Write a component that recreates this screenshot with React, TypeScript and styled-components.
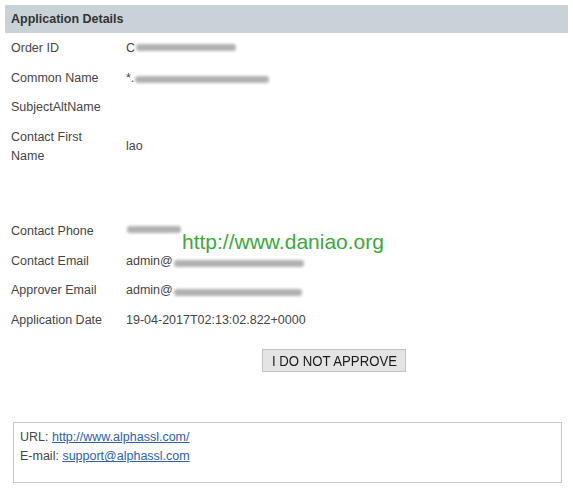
import React from "react";
import styled, { createGlobalStyle } from "styled-components";

const Global = createGlobalStyle`
  html, body { margin: 0; padding: 0; background: #ffffff; }
  body { font-family: "Liberation Sans", Arial, sans-serif; color: #444; }
`;

const Page = styled.div`
  position: relative;
  width: 573px;
  height: 489px;
  box-sizing: border-box;
  padding: 5px 5px 0 5px;
  overflow: hidden;
`;

const Header = styled.div`
  height: 28px;
  background: #c8d2d7;
  display: flex;
  align-items: center;
  padding-left: 6px;
  font-size: 12.5px;
  font-weight: bold;
  color: #333;
`;

const Table = styled.div`
  display: grid;
  grid-template-columns: 115px 1fr;
  padding: 1px 0 0 6px;
`;

const Label = styled.div<{ $h?: number }>`
  font-size: 12.5px;
  line-height: 19.5px;
  padding: 5px 0;
  color: #454545;
  ${(p) => (p.$h ? `height: ${p.$h}px; padding: 0;` : "")}
`;

const Value = styled.div`
  font-size: 12.5px;
  line-height: 19.5px;
  padding: 5px 0;
  color: #454545;
  display: flex;
  align-items: center;
`;

const Blur = styled.span<{ $w: number; $dy?: number }>`
  display: inline-block;
  width: ${(p) => p.$w}px;
  height: 7px;
  background: #b0b0b0;
  border-radius: 3px;
  filter: blur(1.5px);
  margin-left: 1px;
  transform: translateY(${(p) => p.$dy ?? 1}px);
`;

const ButtonRow = styled.div`
  display: flex;
  padding: 14px 0 0 257px;
`;

const Button = styled.button`
  width: 144px;
  height: 23px;
  padding: 0;
  background: #e4e4e4;
  border: 1px solid #c4c4c4;
  font-family: "Liberation Sans", Arial, sans-serif;
  font-size: 15.5px;
  color: #1a1a1a;
  line-height: 21px;
  display: flex;
  align-items: center;
  justify-content: center;
  overflow: hidden;
`;

const ButtonText = styled.span`
  display: inline-block;
  white-space: nowrap;
  transform: scaleX(0.85);
`;

const Footer = styled.div`
  margin: 50px 6px 0 8px;
  height: 61px;
  border: 1px solid #c8c8c8;
  padding: 5px 6px;
  box-sizing: border-box;
  font-size: 12.5px;
  line-height: 19px;
  color: #454545;
`;

const Link = styled.a`
  color: #2e62ae;
  text-decoration: underline;
`;

const Watermark = styled.div`
  position: absolute;
  left: 182px;
  top: 230px;
  font-size: 21px;
  color: #3aa93a;
  font-family: "Liberation Sans", Arial, sans-serif;
`;

export default function App() {
  return (
    <>
      <Global />
      <Page>
        <Header>Application Details</Header>
        <Table>
          <Label>Order ID</Label>
          <Value>
            C<Blur $w={100} $dy={-1} />
          </Value>
          <Label>Common Name</Label>
          <Value>
            *.<Blur $w={134} />
          </Value>
          <Label>SubjectAltName</Label>
          <Value />
          <Label>
            Contact First
            <br />
            Name
          </Label>
          <Value>lao</Value>
          <Label $h={45.75} />
          <Value />
          <Label>Contact Phone</Label>
          <Value>
            <Blur $w={54} $dy={-3} />
          </Value>
          <Label>Contact Email</Label>
          <Value>
            admin@<Blur $w={130} $dy={2} />
          </Value>
          <Label>Approver Email</Label>
          <Value>
            admin@<Blur $w={128} />
          </Value>
          <Label>Application Date</Label>
          <Value>19-04-2017T02:13:02.822+0000</Value>
        </Table>
        <ButtonRow>
          <Button type="button">
            <ButtonText>I DO NOT APPROVE</ButtonText>
          </Button>
        </ButtonRow>
        <Footer>
          URL: <Link href="#">http://www.alphassl.com/</Link>
          <br />
          E-mail: <Link href="#">support@alphassl.com</Link>
        </Footer>
        <Watermark>http://www.daniao.org</Watermark>
      </Page>
    </>
  );
}
